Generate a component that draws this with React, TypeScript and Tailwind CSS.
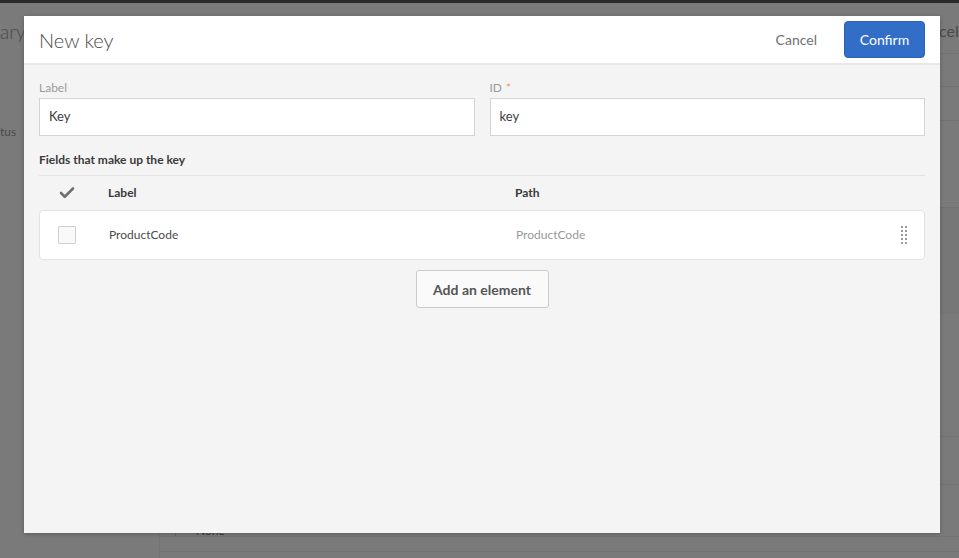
import React from 'react';
import { Check } from 'lucide-react';

const font = { fontFamily: 'Lato, "Open Sans", sans-serif' };

function DragHandle() {
  return (
    <div className="grid grid-cols-2 gap-x-[2px] gap-y-[2px]">
      {Array.from({ length: 10 }).map((_, i) => (
        <span key={i} className="w-[2px] h-[2px] bg-[#9a9a9a]" />
      ))}
    </div>
  );
}

function Field({ label, value, required }: { label: string; value: string; required?: boolean }) {
  return (
    <div className="flex-1 flex flex-col">
      <label className="text-[12px] leading-[16px] text-[#9a9a9a] h-[18px]">
        {label}
        {required && <span className="text-[#f29d49] ml-1">*</span>}
      </label>
      <div className="h-[38px] bg-white border border-[#d4d4d4] flex items-center px-[9px] text-[13px] text-[#3c3c3c]">
        {value}
      </div>
    </div>
  );
}

export default function App() {
  return (
    <div className="relative w-[959px] h-[558px] overflow-hidden bg-[#7a7a7a]" style={font}>
      {/* dimmed page behind the dialog */}
      <div className="h-[3px] bg-[#2a2a2a]" />
      <div className="flex h-[555px]">
        <div className="w-[159px] flex flex-col">
          <div className="pt-[17px] text-[19px] text-[#4a4a4a] font-light leading-[24px]">ary</div>
          <div className="mt-[80px] text-[12px] text-[#4a4a4a] leading-[16px]">tus</div>
        </div>
        <div className="flex-1" />
      </div>

      {/* right column lines peeking past the dialog */}
      <div className="absolute left-[940px] top-[3px] w-[19px] h-[555px] flex flex-col">
        <div className="h-[24px] text-[16px] text-[#4a4a4a] pt-[18px] -ml-[1px] leading-[20px] whitespace-nowrap">cel</div>
        <div className="mt-[26px] border-t border-[#727272]" />
        <div className="mt-[32px] border-t border-[#727272]" />
        <div className="mt-[33px] border-t border-[#727272]" />
        <div className="mt-[80px] border-t border-[#7e7e7e]" />
        <div className="mt-[5px] h-[107px] bg-[#777777] border-t border-[#727272]" />
        <div className="mt-[122px] border-t border-[#727272]" />
        <div className="mt-[47px] border-t border-[#727272]" />
      </div>
      <div className="absolute left-[159px] top-[533px] h-[25px] border-l border-[#737373]" />
      <div className="absolute left-[159px] top-[536px] w-[800px] border-t border-[#737373]" />
      <div className="absolute left-[159px] top-[551px] w-[800px] border-t border-[#737373]" />
      <div className="absolute left-[175px] top-[528px] w-[5px] h-[8px] border-l border-[#6a6a6a]" />
      <div className="absolute left-[196px] top-[525px] text-[12px] leading-[12px] text-[#3a3a3a]">None</div>

      {/* dialog */}
      <div className="absolute left-[24px] top-[16px] w-[916px] h-[517px] bg-[#f4f4f4] flex flex-col shadow-[0_1px_4px_rgba(0,0,0,0.25)]">
        <div className="h-[49px] bg-white border-b-2 border-[#e8e8e8] flex items-center pl-[15px] pr-[15px] shrink-0">
          <h2 className="text-[20px] font-light text-[#4b4b4b] flex-1 leading-none">New key</h2>
          <button className="text-[14px] text-[#707070] mr-[27px]">Cancel</button>
          <button className="h-[37px] w-[81px] rounded-[4px] bg-[#326ec8] border border-[#2a62b8] text-white text-[14px]">
            Confirm
          </button>
        </div>

        <div className="px-[15px] pt-[15px] flex flex-col">
          <div className="flex gap-[15px]">
            <Field label="Label" value="Key" />
            <Field label="ID" value="key" required />
          </div>

          <div className="mt-[16px] text-[12px] font-bold text-[#3a3a3a] leading-[16px]">Fields that make up the key</div>
          <div className="mt-[7px] border-t border-[#e4e4e4]" />

          <div className="h-[34px] flex items-center text-[12px] font-bold text-[#3a3a3a]">
            <div className="w-[69px] pl-[19px] flex items-center">
              <Check size={18} strokeWidth={3.5} className="text-[#707070]" />
            </div>
            <div className="w-[407px]">Label</div>
            <div>Path</div>
          </div>

          <div className="h-[50px] bg-white border border-[#e3e3e3] rounded-[4px] flex items-center text-[12px]">
            <div className="w-[69px] pl-[18px]">
              <div className="w-[18px] h-[18px] border border-[#cfcfcf] bg-[#f9f9f9] rounded-[1px]" />
            </div>
            <div className="w-[407px] text-[#4b4b4b]">ProductCode</div>
            <div className="flex-1 text-[#9a9a9a]">ProductCode</div>
            <div className="pr-[17px]">
              <DragHandle />
            </div>
          </div>

          <div className="flex justify-center mt-[10px]">
            <button className="h-[38px] w-[133px] bg-[#fafafa] border border-[#cbcbcb] rounded-[3px] text-[14px] font-bold text-[#555555]">
              Add an element
            </button>
          </div>
        </div>
      </div>
    </div>
  );
}
